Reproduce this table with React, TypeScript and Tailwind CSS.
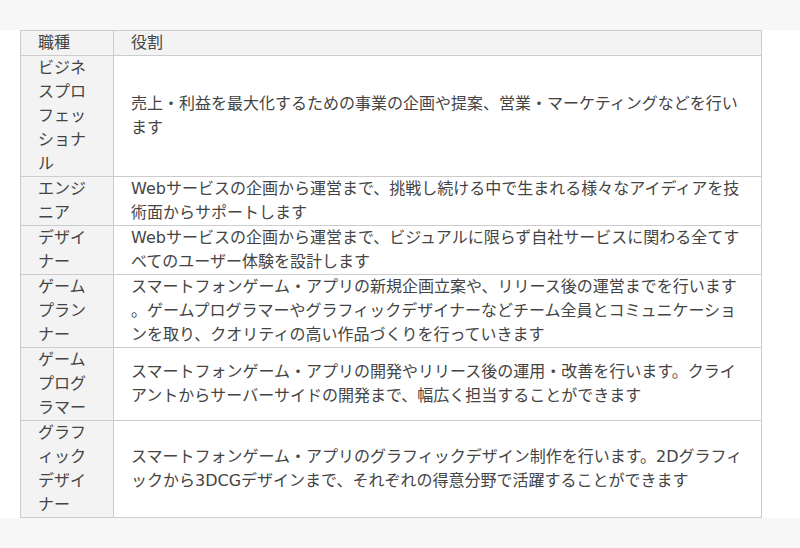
import React from "react";

const rows: { role: string; desc: string }[] = [
  { role: "ビジネスプロフェッショナル", desc: "売上・利益を最大化するための事業の企画や提案、営業・マーケティングなどを行います" },
  { role: "エンジニア", desc: "Webサービスの企画から運営まで、挑戦し続ける中で生まれる様々なアイディアを技術面からサポートします" },
  { role: "デザイナー", desc: "Webサービスの企画から運営まで、ビジュアルに限らず自社サービスに関わる全てすべてのユーザー体験を設計します" },
  { role: "ゲームプランナー", desc: "スマートフォンゲーム・アプリの新規企画立案や、リリース後の運営までを行います。ゲームプログラマーやグラフィックデザイナーなどチーム全員とコミュニケーションを取り、クオリティの高い作品づくりを行っていきます" },
  { role: "ゲームプログラマー", desc: "スマートフォンゲーム・アプリの開発やリリース後の運用・改善を行います。クライアントからサーバーサイドの開発まで、幅広く担当することができます" },
  { role: "グラフィックデザイナー", desc: "スマートフォンゲーム・アプリのグラフィックデザイン制作を行います。2Dグラフィックから3DCGデザインまで、それぞれの得意分野で活躍することができます" },
];

export default function App() {
  return (
    <div
      className="w-[800px] h-[548px] bg-[#f7f7f7] pt-[30px] text-[16px] leading-[24px] text-[#444]"
      style={{ fontFamily: '"DejaVu Sans", "Noto Sans CJK JP", sans-serif' }}
    >
      <div className="bg-white pl-[20px]">
        <table className="w-[742px] border-collapse table-fixed">
          <colgroup>
            <col className="w-[93px]" />
            <col />
          </colgroup>
          <thead>
            <tr className="bg-[#f3f3f3]">
              <th className="border border-[#cccccc] px-[17px] py-0 text-left font-normal">職種</th>
              <th className="border border-[#cccccc] px-[17px] py-0 text-left font-normal">役割</th>
            </tr>
          </thead>
          <tbody>
            {rows.map((r) => (
              <tr key={r.role}>
                <td className="border border-[#cccccc] bg-[#f3f3f3] px-[17px] py-0 align-middle break-all [line-break:anywhere]">{r.role}</td>
                <td className="border border-[#cccccc] px-[17px] py-0 align-middle break-all [line-break:anywhere]">{r.desc}</td>
              </tr>
            ))}
          </tbody>
        </table>
      </div>
    </div>
  );
}
